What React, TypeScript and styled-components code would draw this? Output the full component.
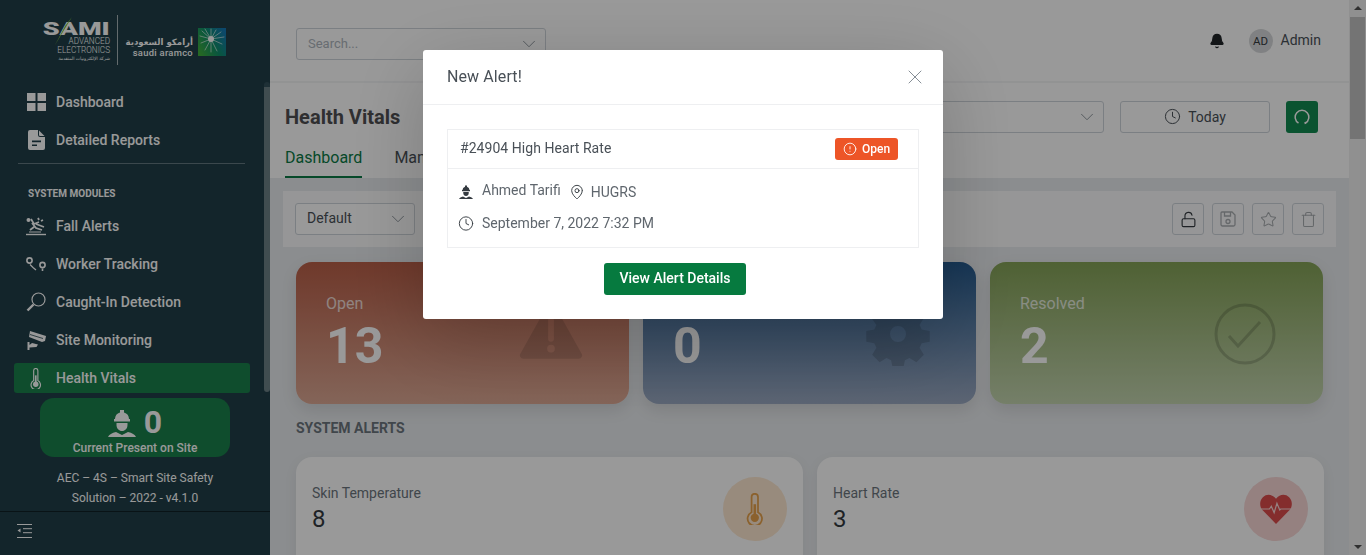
import React from "react";
import styled, { createGlobalStyle } from "styled-components";
import {
  Bell,
  ChevronDown,
  Clock,
  LockOpen,
  MapPin,
  Star,
  Trash,
  X,
  AlertCircle,
} from "lucide-react";

const GlobalStyle = createGlobalStyle`
  html, body {
    margin: 0;
    padding: 0;
    height: 100%;
    overflow: hidden;
    font-family: Roboto, "Liberation Sans", sans-serif;
    background: #e8ebee;
  }
  * { box-sizing: border-box; }
`;

const Page = styled.div`
  width: 1366px;
  height: 555px;
  display: flex;
  overflow: hidden;
`;

const Sidebar = styled.aside`
  width: 270px;
  flex: none;
  height: 555px;
  background: #203f49;
  position: relative;
  display: flex;
  flex-direction: column;
`;

const SideThumb = styled.div`
  position: absolute;
  right: 0;
  top: 82px;
  width: 6px;
  height: 310px;
  background: #6c8086;
  border-top: 5px solid #33505a;
  border-radius: 3px;
`;

const LogoRow = styled.div`
  height: 87px;
  flex: none;
  padding: 15px 0 0 41px;
  display: flex;
  align-items: flex-start;
`;

const SamiLogo = styled.div`
  width: 69px;
  height: 50px;
  display: flex;
  flex-direction: column;
  align-items: flex-end;
  position: relative;
  color: #fff;
`;

const SamiMark = styled.div`
  font-size: 18px;
  line-height: 16px;
  margin-top: 6px;
  font-weight: 900;
  white-space: nowrap;
  transform: scaleX(1.5);
  transform-origin: right center;
`;

const SamiSlash = styled.svg`
  position: absolute;
  left: 14px;
  top: 2px;
`;

const SamiLine = styled.div`
  font-size: 8.2px;
  line-height: 9px;
  font-weight: 300;
  white-space: nowrap;
  &:first-of-type {
    margin-top: 3px;
  }
`;

const SamiArabic = styled.div`
  font-family: "DejaVu Sans", sans-serif;
  font-size: 4.5px;
  line-height: 7px;
  direction: rtl;
  white-space: nowrap;
`;

const LogoDivider = styled.div`
  width: 1px;
  height: 50px;
  background: rgba(255, 255, 255, 0.6);
  margin: 0 7px 0 7px;
`;

const AramcoText = styled.div`
  width: 68px;
  margin-top: 21px;
  color: #fff;
  display: flex;
  flex-direction: column;
  align-items: flex-end;
`;

const AramcoArabic = styled.div`
  font-family: "DejaVu Sans", sans-serif;
  font-size: 8.6px;
  line-height: 12px;
  font-weight: 700;
  direction: rtl;
  white-space: nowrap;
`;

const AramcoLatin = styled.div`
  font-size: 9.4px;
  line-height: 10px;
  font-weight: 500;
  letter-spacing: 0.3px;
  white-space: nowrap;
`;

const AramcoMark = styled.svg`
  margin: 13px 0 0 5px;
  flex: none;
`;

const NavItem = styled.div<{ $active?: boolean }>`
  height: 30px;
  margin: 0 20px 8px 14px;
  padding-left: 10px;
  display: flex;
  align-items: center;
  border-radius: 3px;
  color: #fff;
  font-size: 14px;
  font-weight: 500;
  background: ${(p) => (p.$active ? "#19804b" : "transparent")};
`;

const NavIcon = styled.span`
  width: 24px;
  height: 24px;
  margin-right: 8px;
  display: flex;
  align-items: center;
  justify-content: center;
  flex: none;
`;

const SideDivider = styled.div`
  height: 1px;
  margin: 0 25px 0 18px;
  background: rgba(255, 255, 255, 0.3);
`;

const ModulesTitle = styled.div`
  color: #fff;
  font-size: 10px;
  line-height: 12px;
  font-weight: 700;
  margin: 24px 0 11px 28px;
`;

const PresentBox = styled.div`
  width: 190px;
  height: 59px;
  margin: -3px 0 0 40px;
  border-radius: 14px;
  background: #19804b;
  color: #fff;
  display: flex;
  flex-direction: column;
  align-items: center;
  flex: none;
`;

const PresentTop = styled.div`
  display: flex;
  align-items: center;
  gap: 8px;
  height: 37px;
  margin-top: 6px;
`;

const PresentCount = styled.span`
  font-size: 32px;
  font-weight: 700;
  line-height: 37px;
`;

const PresentLabel = styled.div`
  font-size: 12px;
  line-height: 14px;
  font-weight: 500;
`;

const SideFooter = styled.div`
  margin-top: 11px;
  color: #fff;
  font-size: 12px;
  line-height: 20px;
  text-align: center;
  font-weight: 400;
  height: 43px;
  flex: none;
`;

const CollapseBar = styled.div`
  border-top: 1px solid #0f2026;
  flex: 1;
  padding: 11px 0 0 17px;
`;

const Main = styled.main`
  flex: 1;
  min-width: 0;
  display: flex;
  flex-direction: column;
  overflow: hidden;
`;

const TopBar = styled.header`
  height: 83px;
  flex: none;
  background: #fff;
  border-bottom: 2px solid #f4f5f6;
  display: flex;
  align-items: flex-start;
  padding: 28px 28px 0 26px;
`;

const SelectBox = styled.div<{ $w: number }>`
  width: ${(p) => p.$w}px;
  height: 32px;
  border: 1px solid #ced4da;
  border-radius: 3px;
  background: #fff;
  display: flex;
  align-items: center;
  justify-content: space-between;
  padding: 0 5px 1px 11px;
  font-size: 14px;
  color: #495057;
  flex: none;
`;

const SelectValue = styled.span`
  margin-bottom: 2px;
`;

const Placeholder = styled.span`
  color: #adb5bd;
  font-size: 13px;
`;

const TopRight = styled.div`
  margin-left: auto;
  display: flex;
  align-items: center;
  height: 26px;
`;

const BellWrap = styled.span`
  display: flex;
  margin-left: 1px;
`;

const Avatar = styled.div`
  width: 24px;
  height: 24px;
  border-radius: 50%;
  background: #d6d8da;
  color: #343a40;
  font-size: 11.5px;
  display: flex;
  align-items: center;
  justify-content: center;
  margin: 0 8px 0 24px;
`;

const AdminName = styled.span`
  font-size: 14px;
  color: #495057;
  margin-top: -3px;
`;

const PageHead = styled.section`
  height: 95px;
  flex: none;
  background: #fff;
  padding: 18px 31px 0 15px;
  display: flex;
  justify-content: space-between;
`;

const HeadLeft = styled.div`
  display: flex;
  flex-direction: column;
`;

const PageTitle = styled.h1`
  margin: 4px 0 0;
  font-size: 20px;
  line-height: 24px;
  font-weight: 700;
  color: #4f4f52;
`;

const Tabs = styled.div`
  display: flex;
  gap: 32px;
  margin-top: 16px;
`;

const Tab = styled.div<{ $active?: boolean }>`
  font-size: 16px;
  line-height: 19px;
  height: 33px;
  padding-top: 3px;
  color: ${(p) => (p.$active ? "#0a7a45" : "#495057")};
  border-bottom: ${(p) => (p.$active ? "2px solid #0a7a45" : "none")};
`;

const HeadRight = styled.div`
  display: flex;
  gap: 16px;
`;

const TodayButton = styled.div`
  width: 150px;
  height: 32px;
  border: 1px solid #ced4da;
  border-radius: 3px;
  display: flex;
  align-items: center;
  justify-content: center;
  gap: 7px;
  padding-bottom: 1px;
  font-size: 14px;
  color: #495057;
`;

const RefreshButton = styled.div`
  width: 32px;
  height: 32px;
  border-radius: 3px;
  background: #118a50;
  color: #fff;
  display: flex;
  align-items: center;
  justify-content: center;
`;

const Toolbar = styled.div`
  height: 56px;
  flex: none;
  margin: 13px 13px 0;
  padding: 12px 12px 0;
  background: #fbfbfc;
  display: flex;
  justify-content: space-between;
`;

const ToolButtons = styled.div`
  display: flex;
  gap: 8px;
`;

const ToolButton = styled.div<{ $muted?: boolean }>`
  width: 32px;
  height: 32px;
  border: 1px solid #ced4da;
  border-radius: 3px;
  display: flex;
  align-items: center;
  justify-content: center;
  color: ${(p) => (p.$muted ? "#a9adb1" : "#343a40")};
`;

const StatGrid = styled.div`
  display: grid;
  grid-template-columns: repeat(3, 333px);
  gap: 14px;
  margin: 15px 26px 0;
  flex: none;
`;

const StatCard = styled.div<{ $from: string; $to: string }>`
  height: 142px;
  border-radius: 16px;
  background: linear-gradient(180deg, ${(p) => p.$from}, ${(p) => p.$to});
  box-shadow: 0 6px 16px rgba(0, 0, 0, 0.1);
  padding: 32px 40px 0 30px;
  display: flex;
  justify-content: space-between;
  color: #fff;
`;

const StatLabel = styled.div`
  font-size: 16px;
  line-height: 20px;
  opacity: 0.75;
`;

const StatValue = styled.div`
  font-size: 50px;
  line-height: 56px;
  font-weight: 700;
  margin-top: 4px;
`;

const StatIcon = styled.div`
  width: 76px;
  height: 80px;
  display: flex;
  align-items: center;
  justify-content: center;
`;

const SectionTitle = styled.div`
  margin: 16px 26px 0;
  font-size: 14px;
  line-height: 17px;
  font-weight: 700;
  color: #6c757d;
  flex: none;
`;

const AlertGrid = styled.div`
  display: grid;
  grid-template-columns: repeat(2, 507px);
  gap: 14px;
  margin: 20px 0 0 26px;
  flex: none;
`;

const AlertCard = styled.div`
  height: 120px;
  background: #fff;
  border-radius: 16px;
  box-shadow: 0 4px 14px rgba(0, 0, 0, 0.06);
  padding: 20px 16px 0;
  display: flex;
  justify-content: space-between;
`;

const AlertLabel = styled.div`
  font-size: 14px;
  line-height: 17px;
  color: #6c757d;
  margin-top: 8px;
`;

const AlertValue = styled.div`
  font-size: 24px;
  line-height: 28px;
  color: #343a40;
  margin-top: 3px;
`;

const AlertIcon = styled.div<{ $bg: string }>`
  width: 64px;
  height: 64px;
  border-radius: 50%;
  background: ${(p) => p.$bg};
  display: flex;
  align-items: center;
  justify-content: center;
`;

const ScrollTrack = styled.div`
  width: 17px;
  flex: none;
  height: 555px;
  background: #f1f1f1;
  display: flex;
  flex-direction: column;
  align-items: center;
  justify-content: space-between;
  position: relative;
`;

const ScrollThumb = styled.div`
  position: absolute;
  top: 17px;
  left: 1px;
  width: 15px;
  height: 122px;
  background: #c1c1c1;
`;

const ScrollArrow = styled.div<{ $down?: boolean }>`
  width: 0;
  height: 0;
  margin: 6px 0;
  border-left: 4px solid transparent;
  border-right: 4px solid transparent;
  ${(p) =>
    p.$down ? "border-top: 4px solid #505050;" : "border-bottom: 4px solid #505050;"}
`;

const Overlay = styled.div`
  position: fixed;
  inset: 0;
  background: rgba(0, 0, 0, 0.4);
`;

const Modal = styled.div`
  position: fixed;
  left: 423px;
  top: 50px;
  width: 520px;
  height: 269px;
  background: #fff;
  border-radius: 3px;
  box-shadow: 0 20px 80px rgba(0, 0, 0, 0.2);
`;

const ModalHead = styled.div`
  height: 55px;
  border-bottom: 1px solid #eeeff1;
  padding: 0 16px 0 24px;
  display: flex;
  align-items: center;
  justify-content: space-between;
`;

const ModalTitle = styled.div`
  font-size: 16px;
  color: #495057;
  margin-bottom: 2px;
  letter-spacing: 0.1px;
`;

const ModalBody = styled.div`
  padding: 24px 24px 0;
  display: flex;
  flex-direction: column;
  align-items: center;
`;

const AlertBox = styled.div`
  width: 472px;
  height: 119px;
  border: 1px solid #eeeff1;
`;

const AlertBoxHead = styled.div`
  height: 39px;
  border-bottom: 1px solid #eeeff1;
  padding: 0 20px 0 12px;
  display: flex;
  align-items: center;
  justify-content: space-between;
  font-size: 14px;
  color: #495057;
`;

const AlertBoxTitle = styled.span`
  margin-bottom: 2px;
  letter-spacing: 0.05px;
`;

const StatusBadge = styled.div`
  width: 63px;
  height: 22px;
  border-radius: 3px;
  background: #ed5527;
  color: #fff;
  font-size: 12px;
  font-weight: 500;
  display: flex;
  align-items: center;
  justify-content: center;
  gap: 5px;
`;

const AlertBoxBody = styled.div`
  padding: 12px 10px 0;
  font-size: 14px;
  color: #5f666d;
  display: flex;
  flex-direction: column;
  gap: 9px;
`;

const InfoRow = styled.div`
  height: 22px;
  display: flex;
  align-items: center;
`;

const InfoIcon = styled.span<{ $gap?: number }>`
  width: 16px;
  height: 17px;
  margin-right: ${(p) => p.$gap ?? 8}px;
  display: flex;
  align-items: center;
  justify-content: center;
  color: #343a40;
  flex: none;
`;

const InfoText = styled.span<{ $up?: boolean }>`
  margin-right: 8px;
  ${(p) => (p.$up ? "margin-top: -5px;" : "")}
`;

const DetailsButton = styled.button`
  margin: 15px 16px 0 0;
  width: 142px;
  height: 32px;
  border: 0;
  border-radius: 3px;
  padding: 0 0 2px;
  background: #067a3f;
  color: #fff;
  font-family: inherit;
  font-size: 14px;
  font-weight: 500;
`;

const DashIcon = () => (
  <svg width="19" height="18" viewBox="0 0 19 18" fill="#fff">
    <rect x="0" y="0" width="8.5" height="8" />
    <rect x="10.5" y="0" width="8.5" height="8" />
    <rect x="0" y="10" width="8.5" height="8" />
    <rect x="10.5" y="10" width="8.5" height="8" />
  </svg>
);

const ReportIcon = () => (
  <svg width="17" height="20" viewBox="0 0 17 20">
    <path
      fill="#fff"
      fillRule="evenodd"
      d="M2 0h8v5a2 2 0 0 0 2 2h5v11a2 2 0 0 1-2 2H2a2 2 0 0 1-2-2V2a2 2 0 0 1 2-2zM4 10.500v1.800h9v-1.800zM4 14.500v1.600h5v-1.600z"
    />
    <path fill="#fff" d="M11 .500L16.500 6H12a1 1 0 0 1-1-1z" />
  </svg>
);

const FallIcon = () => (
  <svg width="21" height="19" viewBox="0 0 21 19" fill="none" stroke="#fff">
    <circle cx="2.500" cy="3" r="2" fill="#fff" stroke="none" />
    <path d="M5 2l3 5 5-2M6 6l4 5 6 2M8 10l-4 3M12 1l1 2M15 4l2-1M10 7l8 3" strokeWidth="1.800" />
    <path d="M0 17.500h20" strokeWidth="1.400" />
    <path d="M3 15h12" strokeWidth="1" />
  </svg>
);

const TrackIcon = () => (
  <svg width="21" height="15" viewBox="0 0 21 15" fill="none" stroke="#fff" strokeWidth="1.600">
    <circle cx="3.500" cy="3.500" r="2.600" />
    <path d="M4 7.500l3 3 3 2.500" strokeWidth="1.300" />
    <circle cx="16.500" cy="8" r="2.600" />
    <path d="M16.500 11.500v2.500" />
  </svg>
);

const SearchIcon = () => (
  <svg width="20" height="20" viewBox="0 0 20 20" fill="none" stroke="#fff">
    <circle cx="12.500" cy="7.500" r="6.500" strokeWidth="1.200" />
    <path d="M7.500 12.500L1.500 18.500" strokeWidth="2.400" />
  </svg>
);

const CameraIcon = () => (
  <svg width="19" height="20" viewBox="0 0 19 20" fill="#fff">
    <path d="M3 1l16 5-1 5-3 1-13-5z" />
    <path d="M5 13l6 1.500-1.500 2.500-7 .5v2.500h-2v-8h2v3z" />
    <path d="M3 4.500l13 4" stroke="#203f49" strokeWidth="0.800" fill="none" />
  </svg>
);

const ThermoIcon = ({ color = "#fff", size = 21 }: { color?: string; size?: number }) => (
  <svg width={size * 0.55} height={size} viewBox="0 0 11 20" fill="none" stroke={color}>
    <path d="M3.500 12V2.500a2 2 0 0 1 4 0V12a4.500 4.500 0 1 1-4 0z" strokeWidth="1.100" />
    <circle cx="5.500" cy="15.500" r="2.600" fill={color} stroke="none" />
    <path d="M5.500 7v8" strokeWidth="1.600" />
  </svg>
);

const WorkerIcon = ({ size = 28 }: { size?: number }) => (
  <svg width={size} height={size} viewBox="0 0 28 28" fill="currentColor">
    <path d="M7 10a7 7 0 0 1 5-6.500V1h4v2.500A7 7 0 0 1 21 10h1v2.500H6V10z" />
    <path d="M8.500 14h11v2c0 3.500-2.500 6-5.500 6s-5.500-2.500-5.500-6z" />
    <path d="M0 28c1-2.500 4-4 8-5l6 3 6-3c4 1 7 2.500 8 5z" />
  </svg>
);

const CollapseIcon = () => (
  <svg width="15" height="14" viewBox="0 0 15 14" stroke="#fff" fill="#fff">
    <path d="M0 .500h15M6 4.700h9M6 8.700h9M0 13.500h15" />
    <path d="M3.500 4.500v4l-3-2z" stroke="none" />
  </svg>
);

const RefreshIcon = () => (
  <svg width="16" height="16" viewBox="0 0 16 16" fill="none" stroke="#fff" strokeWidth="1.500">
    <path d="M4.500 14A6.800 6.800 0 1 1 11.500 14" />
    <path d="M11 13l.5 2" />
  </svg>
);

const FloppyIcon = () => (
  <svg width="16" height="16" viewBox="0 0 16 16" fill="none" stroke="currentColor" strokeWidth="1.300">
    <path d="M2 1h10l3 3v9.500a1.500 1.500 0 0 1-1.500 1.500h-11A1.500 1.500 0 0 1 1 13.500V2a1 1 0 0 1 1-1z" />
    <path d="M4.500 1v4h6V1" />
    <circle cx="8" cy="10.500" r="2" />
  </svg>
);

const AramcoLogo = () => (
  <AramcoMark width="28" height="28" viewBox="0 0 28 28">
    <defs>
      <linearGradient id="aramco" x1="0" y1="0.800" x2="1" y2="0.200">
        <stop offset="0" stopColor="#3fae3c" />
        <stop offset="0.500" stopColor="#0f8f6a" />
        <stop offset="1" stopColor="#1478b4" />
      </linearGradient>
    </defs>
    <rect width="28" height="28" fill="url(#aramco)" />
    <g stroke="#fff" strokeWidth="0.700" strokeLinecap="round" opacity="0.850">
      <path d="M13 11L7 1M13 11L13 1M13 11l5-9M13 11l10-7M13 11l13-2M13 11l11 5M13 11l6 12M13 11l0 13M13 11l-6 11M13 11L3 15M13 11L2 8M13 11L4 3" />
    </g>
    <circle cx="13" cy="11" r="3" fill="#fff" />
  </AramcoMark>
);

const navTop = [
  { label: "Dashboard", icon: <DashIcon /> },
  { label: "Detailed Reports", icon: <ReportIcon /> },
];

const navModules = [
  { label: "Fall Alerts", icon: <FallIcon /> },
  { label: "Worker Tracking", icon: <TrackIcon /> },
  { label: "Caught-In Detection", icon: <SearchIcon /> },
  { label: "Site Monitoring", icon: <CameraIcon /> },
  { label: "Health Vitals", icon: <ThermoIcon />, active: true },
];

const App = () => {
  return (
    <>
      <GlobalStyle />
      <Page>
        <Sidebar>
          <LogoRow>
            <SamiLogo>
              <SamiMark>SAMI</SamiMark>
              <SamiSlash width="17" height="28" viewBox="0 0 17 28">
                <path d="M17 0L0 28 10 9z" fill="#7fc241" />
              </SamiSlash>
              <SamiLine>ADVANCED</SamiLine>
              <SamiLine>ELECTRONICS</SamiLine>
              <SamiArabic>شركة الإلكترونيات المتقدمة</SamiArabic>
            </SamiLogo>
            <LogoDivider />
            <AramcoText>
              <AramcoArabic>أرامكو السعودية</AramcoArabic>
              <AramcoLatin>saudi aramco</AramcoLatin>
            </AramcoText>
            <AramcoLogo />
          </LogoRow>
          {navTop.map((item) => (
            <NavItem key={item.label}>
              <NavIcon>{item.icon}</NavIcon>
              {item.label}
            </NavItem>
          ))}
          <SideDivider />
          <ModulesTitle>SYSTEM MODULES</ModulesTitle>
          {navModules.map((item) => (
            <NavItem key={item.label} $active={item.active}>
              <NavIcon>{item.icon}</NavIcon>
              {item.label}
            </NavItem>
          ))}
          <PresentBox>
            <PresentTop>
              <WorkerIcon />
              <PresentCount>0</PresentCount>
            </PresentTop>
            <PresentLabel>Current Present on Site</PresentLabel>
          </PresentBox>
          <SideFooter>
            AEC – 4S – Smart Site Safety
            <br />
            Solution – 2022 - v4.1.0
          </SideFooter>
          <CollapseBar>
            <CollapseIcon />
          </CollapseBar>
          <SideThumb />
        </Sidebar>
        <Main>
          <TopBar>
            <SelectBox $w={250}>
              <Placeholder>Search...</Placeholder>
              <ChevronDown size={22} color="#868e96" strokeWidth={1} />
            </SelectBox>
            <TopRight>
              <BellWrap>
                <Bell size={16} fill="#212529" color="#212529" />
              </BellWrap>
              <Avatar>AD</Avatar>
              <AdminName>Admin</AdminName>
            </TopRight>
          </TopBar>
          <PageHead>
            <HeadLeft>
              <PageTitle>Health Vitals</PageTitle>
              <Tabs>
                <Tab $active>Dashboard</Tab>
                <Tab>Manage</Tab>
              </Tabs>
            </HeadLeft>
            <HeadRight>
              <SelectBox $w={250}>
                <Placeholder />
                <ChevronDown size={22} color="#868e96" strokeWidth={1} />
              </SelectBox>
              <TodayButton>
                <Clock size={17} strokeWidth={1.4} />
                Today
              </TodayButton>
              <RefreshButton>
                <RefreshIcon />
              </RefreshButton>
            </HeadRight>
          </PageHead>
          <Toolbar>
            <SelectBox $w={120}>
              <SelectValue>Default</SelectValue>
              <ChevronDown size={22} color="#868e96" strokeWidth={1} />
            </SelectBox>
            <ToolButtons>
              <ToolButton>
                <LockOpen size={17} strokeWidth={1.6} />
              </ToolButton>
              <ToolButton $muted>
                <FloppyIcon />
              </ToolButton>
              <ToolButton $muted>
                <Star size={17} strokeWidth={1.5} />
              </ToolButton>
              <ToolButton $muted>
                <Trash size={17} strokeWidth={1.5} />
              </ToolButton>
            </ToolButtons>
          </Toolbar>
          <StatGrid>
            <StatCard $from="#b95f48" $to="#dca894">
              <div>
                <StatLabel>Open</StatLabel>
                <StatValue>13</StatValue>
              </div>
              <StatIcon>
                <svg width="64" height="62" viewBox="0 0 66 64">
                  <path
                    fillRule="evenodd"
                    fill="rgba(0,0,0,0.12)"
                    d="M33 0a4 4 0 0 1 3.500 2l28 50a3.500 3.500 0 0 1-3 5.500h-57a3.500 3.500 0 0 1-3-5.500L29.500 2A4 4 0 0 1 33 0zM30 18v19a3 3 0 0 0 6 0V18a3 3 0 0 0-6 0zM33 43a4 4 0 1 0 0 8 4 4 0 0 0 0-8z"
                  />
                </svg>
              </StatIcon>
            </StatCard>
            <StatCard $from="#255a8e" $to="#9aa8c0">
              <div>
                <StatLabel>In Progress</StatLabel>
                <StatValue>0</StatValue>
              </div>
              <StatIcon>
                <svg width="64" height="64" viewBox="0 0 24 24">
                  <path
                    fill="rgba(0,0,0,0.14)"
                    fillRule="evenodd"
                    d="M10 1h4l.6 3 1.700.8 2.600-1.600 2.800 2.800-1.600 2.600.8 1.700 3 .6v4l-3 .6-.8 1.700 1.600 2.600-2.800 2.800-2.600-1.600-1.700.8-.6 3h-4l-.6-3-1.700-.8-2.600 1.600-2.800-2.800 1.600-2.600-.8-1.700-3-.6v-4l3-.6.8-1.700L2 6l2.800-2.800 2.600 1.600L9.100 4zM12 9a3 3 0 1 0 0 6 3 3 0 0 0 0-6z"
                  />
                </svg>
              </StatIcon>
            </StatCard>
            <StatCard $from="#84a257" $to="#c3d4af">
              <div>
                <StatLabel>Resolved</StatLabel>
                <StatValue>2</StatValue>
              </div>
              <StatIcon>
                <svg width="62" height="62" viewBox="0 0 62 62" fill="none" stroke="rgba(0,0,0,0.16)" strokeWidth="3">
                  <circle cx="31" cy="31" r="29" />
                  <path d="M15 33l9 10 22-24" />
                </svg>
              </StatIcon>
            </StatCard>
          </StatGrid>
          <SectionTitle>SYSTEM ALERTS</SectionTitle>
          <AlertGrid>
            <AlertCard>
              <div>
                <AlertLabel>Skin Temperature</AlertLabel>
                <AlertValue>8</AlertValue>
              </div>
              <AlertIcon $bg="#fde8d0">
                <ThermoIcon color="#e8a24c" size={32} />
              </AlertIcon>
            </AlertCard>
            <AlertCard>
              <div>
                <AlertLabel>Heart Rate</AlertLabel>
                <AlertValue>3</AlertValue>
              </div>
              <AlertIcon $bg="#f8d7d6">
                <svg width="32" height="30" viewBox="0 0 34 32">
                  <path
                    fill="#dc4c4c"
                    d="M17 32L2.500 17C-1 13-.5 7 3 3.500 7-.5 13 0 17 5c4-5 10-5.500 14-1.500 3.500 3.500 4 9.500.5 13.500z"
                  />
                  <path
                    d="M1 16h9l2-3 3 7 3-10 3 7 1-1h11"
                    fill="none"
                    stroke="#f8d7d6"
                    strokeWidth="1.300"
                  />
                </svg>
              </AlertIcon>
            </AlertCard>
          </AlertGrid>
        </Main>
        <ScrollTrack>
          <ScrollArrow />
          <ScrollThumb />
          <ScrollArrow $down />
        </ScrollTrack>
      </Page>
      <Overlay />
      <Modal>
        <ModalHead>
          <ModalTitle>New Alert!</ModalTitle>
          <X size={24} color="#868e96" strokeWidth={1} />
        </ModalHead>
        <ModalBody>
          <AlertBox>
            <AlertBoxHead>
              <AlertBoxTitle>#24904 High Heart Rate</AlertBoxTitle>
              <StatusBadge>
                <AlertCircle size={14} strokeWidth={1.5} />
                Open
              </StatusBadge>
            </AlertBoxHead>
            <AlertBoxBody>
              <InfoRow>
                <InfoIcon>
                  <WorkerIcon size={14} />
                </InfoIcon>
                <InfoText $up>Ahmed Tarifi</InfoText>
                <InfoIcon $gap={6}>
                  <MapPin size={16} strokeWidth={1.4} />
                </InfoIcon>
                <InfoText>HUGRS</InfoText>
              </InfoRow>
              <InfoRow>
                <InfoIcon>
                  <Clock size={17} strokeWidth={1.4} />
                </InfoIcon>
                <InfoText>September 7, 2022 7:32 PM</InfoText>
              </InfoRow>
            </AlertBoxBody>
          </AlertBox>
          <DetailsButton>View Alert Details</DetailsButton>
        </ModalBody>
      </Modal>
    </>
  );
};

export default App;
